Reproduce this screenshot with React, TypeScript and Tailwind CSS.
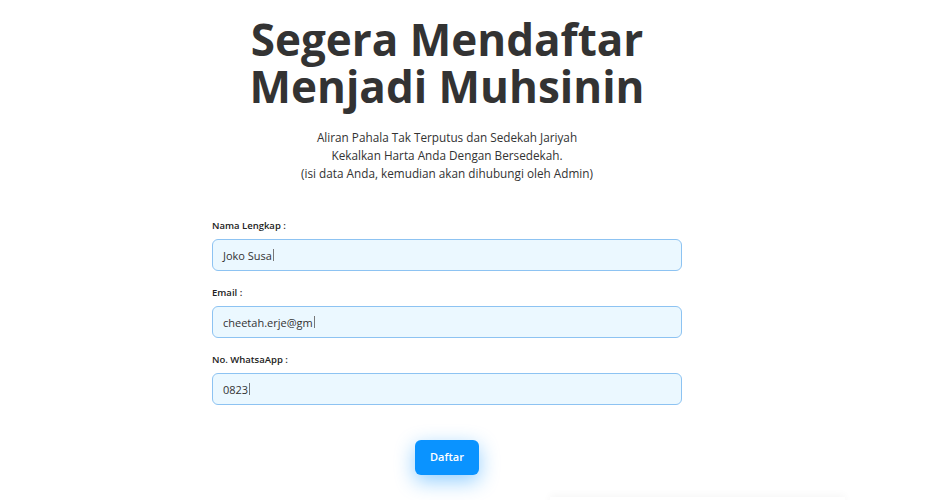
import React from 'react'

const font = { fontFamily: '"Open Sans", "Noto Sans", sans-serif' }

const Field: React.FC<{ label: string; value: string }> = ({ label, value }) => (
  <div className="w-full">
    <label className="block text-[9.5px] font-semibold text-[#222] mb-[6px] leading-[14px]">
      {label}
    </label>
    <div className="h-[32px] w-full rounded-[6px] border border-[#8dc3f2] bg-[#ebf8ff] flex items-center px-[10px]">
      <span className="text-[11px] text-[#333] leading-none">{value}</span>
      <span className="ml-px w-px h-[12px] bg-[#777]" />
    </div>
  </div>
)

export default function App() {
  return (
    <div className="relative w-[932px] h-[500px] overflow-hidden bg-white" style={font}>
      <div className="w-[894px] flex flex-col items-center pt-[16px]">
        {/* Heading */}
        <h1 className="text-[44px] font-bold leading-[47px] text-[#333] text-center">
          Segera Mendaftar
          <br />
          Menjadi Muhsinin
        </h1>

        {/* Subtitle */}
        <p className="mt-[18px] text-[11.75px] leading-[18px] text-[#333] text-center">
          Aliran Pahala Tak Terputus dan Sedekah Jariyah
          <br />
          Kekalkan Harta Anda Dengan Bersedekah.
          <br />
          (isi data Anda, kemudian akan dihubungi oleh Admin)
        </p>

        {/* Form */}
        <form
          onSubmit={(e) => e.preventDefault()}
          className="mt-[37px] w-[470px] flex flex-col gap-[15px]"
        >
          <Field label="Nama Lengkap :" value="Joko Susa" />
          <Field label="Email :" value="cheetah.erje@gm" />
          <Field label="No. WhatsaApp :" value="0823" />

          <div className="flex justify-center mt-[20px]">
            <button
              type="submit"
              className="w-[64px] h-[35px] rounded-[6px] bg-[#0a93ff] text-white text-[11px] font-semibold shadow-[0_6px_20px_rgba(10,147,255,0.45)]"
            >
              Daftar
            </button>
          </div>
        </form>
      </div>

      {/* card peeking from below */}
      <div className="absolute left-[550px] top-[497px] w-[295px] h-[60px] bg-white shadow-[0_-2px_8px_rgba(0,0,0,0.04)]" />
    </div>
  )
}
